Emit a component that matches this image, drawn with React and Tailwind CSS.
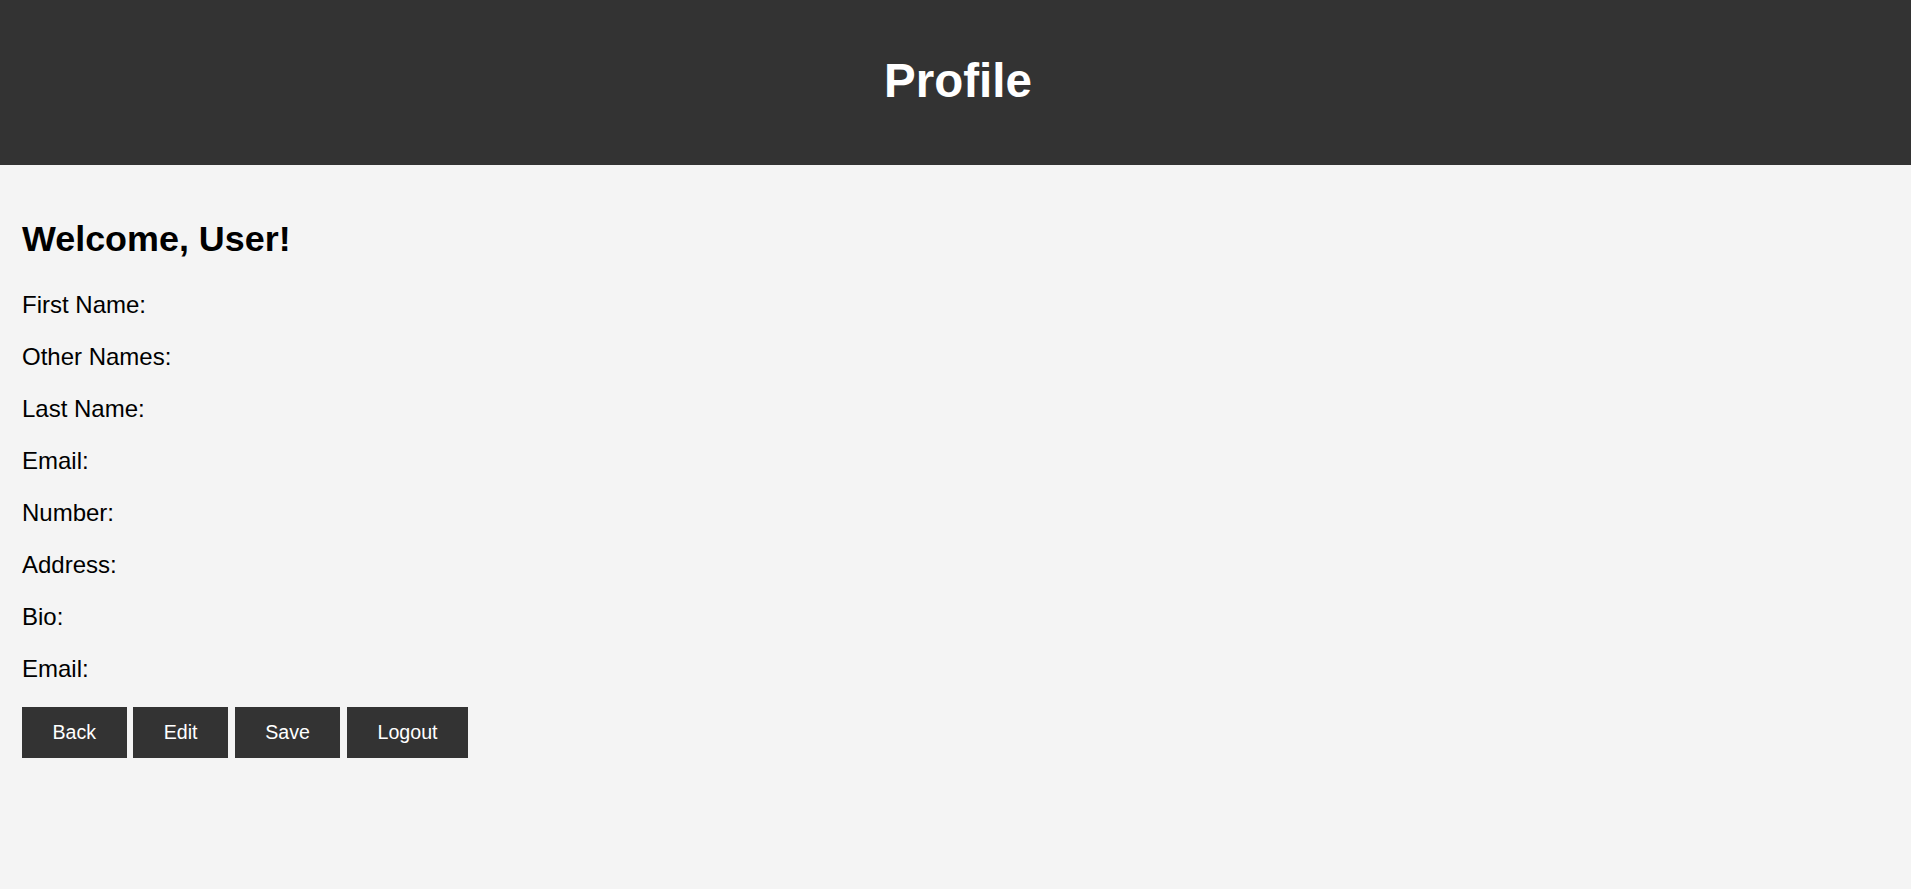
export default function App() {
  const fields = [
    "First Name:",
    "Other Names:",
    "Last Name:",
    "Email:",
    "Number:",
    "Address:",
    "Bio:",
    "Email:",
  ];
  const buttons = ["Back", "Edit", "Save", "Logout"];
  return (
    <div
      className="min-h-screen bg-[#f4f4f4] text-black"
      style={{ fontFamily: '"Liberation Sans", Arial, sans-serif' }}
    >
      <header className="h-[165px] bg-[#333333] flex justify-center pt-[54px] pl-[5px]">
        <h1 className="text-[47.5px] leading-[1.15] font-bold text-white">Profile</h1>
      </header>
      <main className="px-[22px] pt-[54px]">
        <h2 className="text-[35.9px] leading-[40.9px] font-bold">Welcome, User!</h2>
        <div className="mt-[32.2px] flex flex-col gap-[25.05px]">
          {fields.map((f, i) => (
            <p key={i} className="text-[24px] leading-[26.9px]">
              {f}
            </p>
          ))}
        </div>
        <div className="mt-[24.1px] flex gap-[6.7px]">
          {buttons.map((b) => (
            <button
              key={b}
              className="bg-[#333333] text-white text-[19.6px] leading-[1.15] px-[30.5px] h-[51px] flex items-center"
            >
              {b}
            </button>
          ))}
        </div>
      </main>
    </div>
  );
}
